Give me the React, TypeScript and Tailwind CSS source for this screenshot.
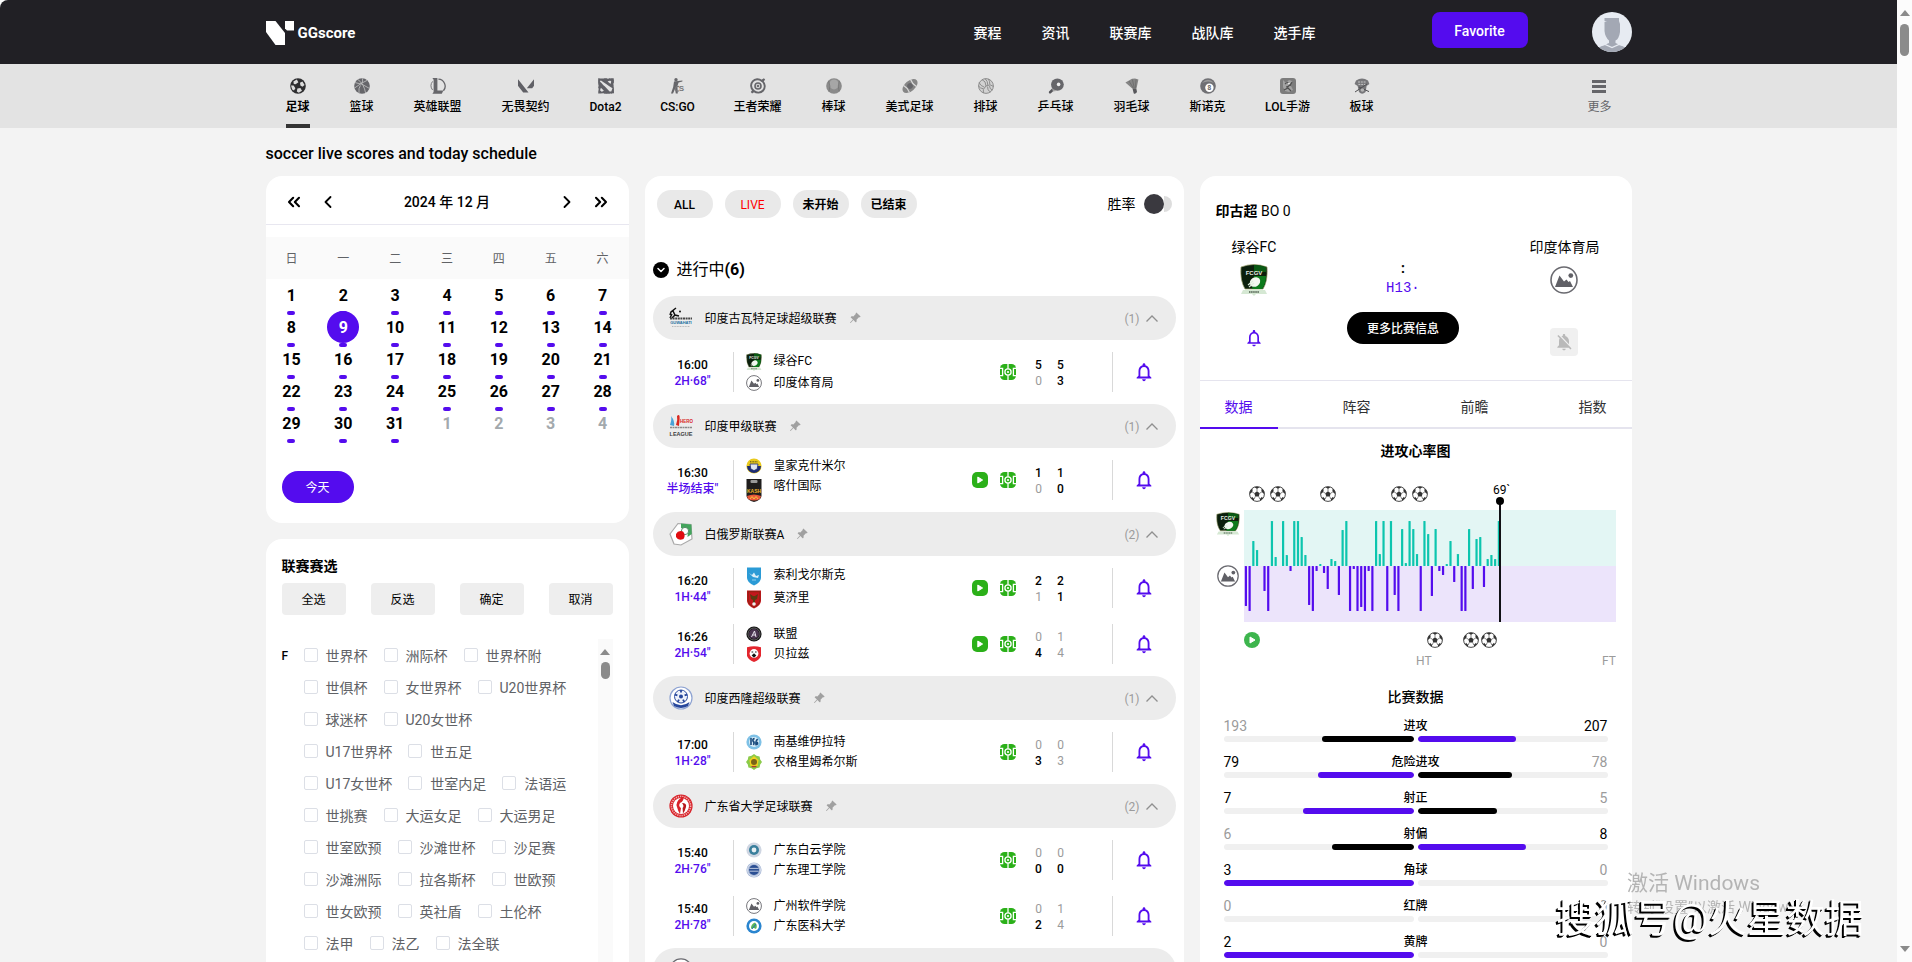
import { useState } from 'react';
import type { ReactNode } from 'react';
import { ChevronDown, ChevronLeft, ChevronRight, ChevronsLeft, ChevronsRight } from 'lucide-react';
import { BsPinAngleFill } from 'react-icons/bs';
import { MdNotificationsNone, MdNotificationsOff } from 'react-icons/md';
import { SiDota2, SiValorant } from 'react-icons/si';

const WEEKDAYS = ['日', '一', '二', '三', '四', '五', '六'];
const DAYS = Array.from({ length: 35 }, (_, i) => (i < 31 ? { n: i + 1, next: false } : { n: i - 30, next: true }));

const LEAGUE_ROWS = [
  ['世界杯', '洲际杯', '世界杯附'],
  ['世俱杯', '女世界杯', 'U20世界杯'],
  ['球迷杯', 'U20女世杯'],
  ['U17世界杯', '世五足'],
  ['U17女世杯', '世室内足', '法语运'],
  ['世挑赛', '大运女足', '大运男足'],
  ['世室欧预', '沙滩世杯', '沙足赛'],
  ['沙滩洲际', '拉各斯杯', '世欧预'],
  ['世女欧预', '英社盾', '土伦杯'],
  ['法甲', '法乙', '法全联'],
];

type Team = { name: string; logo: ReactNode };
type Match = { time: string; status: string; video?: boolean; home: Team; away: Team; half: [number, number]; full: [number, number]; bold: [boolean, boolean, boolean, boolean] };
type League = { name?: string; logo: ReactNode; matches: Match[] };

/* ---------- logos ---------- */

function NoLogo({ className = 'size-4' }: { className?: string }) {
  return (
    <svg viewBox="0 0 28 28" className={className} aria-hidden="true">
      <circle cx="14" cy="14" r="13" fill="#fff" stroke="#6a6a70" strokeWidth="1.6" />
      <path d="M5 21 L9.5 9.5 L14 15.5 L16.5 13.5 L18.5 16 L20 15 L23 21 Z" fill="#606066" />
      <circle cx="20.8" cy="9.6" r="2.4" fill="#606066" />
    </svg>
  );
}

function GreenShield({ className = 'w-4 h-[18px]' }: { className?: string }) {
  return (
    <svg viewBox="0 0 28 32" className={className} aria-hidden="true" preserveAspectRatio="none">
      <path d="M3 26 H25 L27 30 H16 L14 32 L12 30 H1 Z" fill="#d5e8d3" />
      <path d="M1 3 Q14 -2 27 3 Q28 17 23 25 H5 Q0 17 1 3 Z" fill="#0b1f0c" stroke="#9aa06a" strokeWidth="0.7" />
      <path d="M14 12 H26 Q26 20 22 25 H12 Z" fill="#0d7a1c" />
      <path d="M14 1 Q21 1 26 3 V8 H14 Z" fill="#0a5a14" />
      <text x="14" y="11" fontSize="6" fontFamily="Liberation Sans, sans-serif" fontWeight="700" fill="#e8efe6" textAnchor="middle">FCGV</text>
      <ellipse cx="15" cy="18" rx="5.5" ry="4.5" fill="#f3f8f1" transform="rotate(-35 15 18)" />
      <path d="M8 21 L13 17 M9 23 L14 19" stroke="#dfeedd" strokeWidth="1.2" />
      <path d="M9 28 H19" stroke="#4a5a4a" strokeWidth="1.4" strokeDasharray="1.5 0.6" />
    </svg>
  );
}

function Kashmir() {
  return (
    <svg viewBox="0 0 16 16" className="size-4" aria-hidden="true">
      <circle cx="8" cy="8" r="7.6" fill="#e9c91c" />
      <path d="M1 8 H15 A7 7 0 0 1 1 8 Z" fill="#1d2c74" />
      <path d="M4 6 H12 L11.2 11 L8 12.6 L4.8 11 Z" fill="#dfe5ee" stroke="#1d2c74" strokeWidth="0.8" />
      <path d="M4 3.8 H12" stroke="#4d4a1c" strokeWidth="1" strokeDasharray="1 0.6" />
    </svg>
  );
}

function Kash() {
  return (
    <svg viewBox="0 0 16 24" className="h-6 w-4" aria-hidden="true">
      <path d="M0.5 1 H15.5 V18 Q15 22 8 24 Q1 22 0.5 18 Z" fill="#1f1d1d" />
      <rect x="4.5" y="2" width="7" height="3" rx="1" fill="#9a9a9a" />
      <text x="8" y="15" fontSize="5" fontFamily="Liberation Sans, sans-serif" fontWeight="700" fill="#eeb62b" textAnchor="middle">KASH</text>
      <path d="M1 18 Q8 15 15 18 L14 21 Q8 24 2 21 Z" fill="#e9573a" />
      <path d="M4 21 L6 18.5 L8 21 L10 18.5 L12 21" fill="none" stroke="#f6c33b" strokeWidth="1" />
    </svg>
  );
}

function Shield({ fill, children }: { fill: string; children?: ReactNode }) {
  return (
    <svg viewBox="0 0 16 19" className="h-[19px] w-4" aria-hidden="true">
      <path d="M1 0.5 H15 V11 Q14.5 16 8 18.5 Q1.5 16 1 11 Z" fill={fill} />
      {children}
    </svg>
  );
}

function Round({ ring, inner, children }: { ring: string; inner: string; children?: ReactNode }) {
  return (
    <svg viewBox="0 0 16 16" className="size-4" aria-hidden="true">
      <circle cx="8" cy="8" r="7.6" fill={ring} />
      <circle cx="8" cy="8" r="5" fill={inner} />
      {children}
    </svg>
  );
}

const soligorsk = (
  <Shield fill="#2b9bd6">
    <path d="M3 6 L6 8 L8 5.5 L10 9 L13 8 L12 11 L7 10 Z" fill="#d9eef8" />
    <path d="M6 13 H10" stroke="#8fd0ee" />
  </Shield>
);
const mozyr = (
  <Shield fill="#c4161c">
    <path d="M2.2 1.7 H13.8 V11 Q13.4 15 8 17.2 Q2.6 15 2.2 11 Z" fill="none" stroke="#7e2a12" strokeWidth="0.8" />
    <path d="M4 4 L7 6 H9 L12 4 L11 9 L9 10 V13 H7 V10 L5 9 Z" fill="#5c3a10" />
    <circle cx="8" cy="14" r="1.8" fill="#eee" />
  </Shield>
);
const union = (
  <Round ring="#151515" inner="#4a3550">
    <circle cx="8" cy="8" r="6" fill="none" stroke="#8d8d8d" strokeWidth="0.6" />
    <path d="M5.5 11 L8.5 5 L10 11 M6.5 9 H10" stroke="#e8e4ee" fill="none" strokeWidth="1" />
  </Round>
);
const belaz = (
  <svg viewBox="0 0 16 16" className="size-4" aria-hidden="true">
    <path d="M1 1.2 Q8 -0.5 15 1.2 V10 Q13 14.5 8 16 Q3 14.5 1 10 Z" fill="#e3262e" />
    <circle cx="8" cy="7.5" r="4.4" fill="#fff" />
    <path d="M5.5 6 H7.2 M9 6 H10.6 M6.5 9.5 L8 8 L9.5 9.5 L8 11 Z" stroke="#1c1c1c" strokeWidth="1.2" />
  </svg>
);
const isg = (
  <Round ring="#7fc1e6" inner="#dbeef8">
    <path d="M5 4 V11 M8.6 4.6 Q6.4 4.6 7 7 Q9 8.5 7.4 11 M11.6 5 Q9.4 7 10 10.6 Q12.6 10 11 8" stroke="#17497c" strokeWidth="1.6" fill="none" />
  </Round>
);
const nongrim = (
  <svg viewBox="0 0 16 16" className="size-4" aria-hidden="true">
    <path d="M8 0 L10.5 1.8 L13.6 2.4 L14.2 5.6 L16 8 L14.2 10.5 L13.6 13.6 L10.4 14.2 L8 16 L5.6 14.2 L2.4 13.6 L1.8 10.5 L0 8 L1.8 5.6 L2.4 2.4 L5.5 1.8 Z" fill="#8bcb4a" />
    <path d="M8 2 L12.6 6 L11.6 12 H4.4 L3.4 6 Z" fill="#f0d21e" />
    <circle cx="8" cy="8" r="3" fill="#7a6418" />
    <path d="M5.6 12.6 H10.4" stroke="#b1392e" strokeWidth="1.4" />
  </svg>
);
const baiyun = (
  <Round ring="#cfd6e2" inner="#3a7f9c">
    <circle cx="8" cy="8" r="2.4" fill="#e6eff3" />
  </Round>
);
const ligong = (
  <Round ring="#a3b4d4" inner="#2b4f93">
    <path d="M3.4 6.4 H12.6 M3.4 9.2 H12.6" stroke="#dfe6f3" strokeWidth="0.8" />
    <circle cx="8" cy="8" r="6.4" fill="none" stroke="#fff" strokeWidth="0.6" />
  </Round>
);
const yike = (
  <Round ring="#2a85cf" inner="#fff">
    <path d="M5 11 Q4.6 6 9 4.4 Q12 7 10 11 Q7 9 5 11 Z" fill="#5bb65a" />
    <path d="M6 11 L10 6" stroke="#1f6fb8" strokeWidth="1" />
  </Round>
);

const guwahatiLogo = (
  <svg viewBox="0 0 24 24" className="size-6" aria-hidden="true">
    <path d="M7 2 L2 6 L1 9 M4 5 L6 9 L10 10 M3 8 L1 12 M6 9 L3 12" stroke="#111" strokeWidth="1.5" fill="none" />
    <circle cx="11" cy="5.5" r="1" fill="#111" />
    <path d="M1 12.5 H23" stroke="#444" strokeWidth="2" strokeDasharray="2 0.6" />
    <text x="12" y="18" fontSize="4" fontFamily="Liberation Sans, sans-serif" fontWeight="700" fill="#24709f" textAnchor="middle">GUWAHATI</text>
    <path d="M3 20.5 H21" stroke="#b9b9b9" strokeDasharray="1 0.6" />
  </svg>
);
const ileagueLogo = (
  <svg viewBox="0 0 24 26" className="h-[26px] w-6" aria-hidden="true">
    <path d="M1 12 Q3 6 2 3 Q6 8 5 13 Z" fill="#4aa3d8" />
    <path d="M7 12 Q9 7 8 3 Q11 0 10.6 6 L10 13 Z" fill="#d9281f" />
    <text x="17.5" y="10" fontSize="4.5" fontFamily="Liberation Sans, sans-serif" fontWeight="700" fill="#d8232a" textAnchor="middle">HERO</text>
    <path d="M1 14.5 H23" stroke="#8a8a8a" strokeWidth="1.4" strokeDasharray="2 0.5" />
    <text x="12" y="22.5" fontSize="5.5" fontFamily="Liberation Sans, sans-serif" fontWeight="700" fill="#3c3c3c" textAnchor="middle">LEAGUE</text>
  </svg>
);
const belarusLogo = (
  <svg viewBox="0 0 24 24" className="size-6" aria-hidden="true">
    <path d="M1 12 L9 1.5 L22 2.5 L23 17 L12 23 L5 22 Z" fill="#fff" stroke="#a9a9a9" strokeWidth="1.2" />
    <path d="M12 1.6 L22.4 2.6 L22.8 12 L18.5 15 Q21 7 12 6 Z" fill="#43a45c" />
    <circle cx="16" cy="9" r="3.6" fill="#fff" stroke="#4f8560" strokeWidth="0.9" />
    <path d="M7 12 Q9 8 14 9.5 Q17 13 14.5 17 Q9 19 7 15 Z" fill="#e00d10" />
  </svg>
);
const shillongLogo = (
  <svg viewBox="0 0 24 24" className="size-6" aria-hidden="true">
    <circle cx="12" cy="12" r="11" fill="#fff" stroke="#8ea3d2" strokeWidth="1.2" />
    <circle cx="12" cy="10.5" r="6.5" fill="#eef2fb" stroke="#2e4ea1" strokeWidth="1" />
    <circle cx="12" cy="10.5" r="2" fill="#27479c" />
    <path d="M12 4 V6.6 M6 8.6 L8.4 9.4 M18 8.6 L15.6 9.4 M8.6 16 L10 13.6 M15.4 16 L14 13.6" stroke="#27479c" strokeWidth="1.8" />
    <path d="M3.5 16 Q12 22.5 20.5 16 L19 20 Q12 24 5 20 Z" fill="#27479c" />
  </svg>
);
const guangdongLogo = (
  <svg viewBox="0 0 24 24" className="size-6" aria-hidden="true">
    <circle cx="12" cy="12" r="11.6" fill="#d8232a" />
    <circle cx="12" cy="12" r="9.6" fill="none" stroke="#f0b3b3" strokeWidth="1.6" strokeDasharray="1.2 1" />
    <circle cx="12" cy="12" r="8" fill="#fff" />
    <path d="M13 3 Q6 8 8 13 Q9 17 11 20 L12 14 Q9 12 11 9 Q15 7 14.6 3 Z" fill="#d8232a" />
    <path d="M13 9 Q18 9 17 13 Q16 17 14 19.5 L13.6 14 Q15.6 12 13 9 Z" fill="#b8171d" />
  </svg>
);

const LEAGUES: League[] = [
  {
    name: '印度古瓦特足球超级联赛',
    logo: guwahatiLogo,
    matches: [
      { time: '16:00', status: '2H·68"', home: { name: '绿谷FC', logo: <GreenShield /> }, away: { name: '印度体育局', logo: <NoLogo /> }, half: [5, 0], full: [5, 3], bold: [true, false, true, true] },
    ],
  },
  {
    name: '印度甲级联赛',
    logo: ileagueLogo,
    matches: [
      { time: '16:30', status: '半场结束"', video: true, home: { name: '皇家克什米尔', logo: <Kashmir /> }, away: { name: '喀什国际', logo: <Kash /> }, half: [1, 0], full: [1, 0], bold: [true, false, true, true] },
    ],
  },
  {
    name: '白俄罗斯联赛A',
    logo: belarusLogo,
    matches: [
      { time: '16:20', status: '1H·44"', video: true, home: { name: '索利戈尔斯克', logo: soligorsk }, away: { name: '莫济里', logo: mozyr }, half: [2, 1], full: [2, 1], bold: [true, false, true, true] },
      { time: '16:26', status: '2H·54"', video: true, home: { name: '联盟', logo: union }, away: { name: '贝拉兹', logo: belaz }, half: [0, 4], full: [1, 4], bold: [false, true, false, false] },
    ],
  },
  {
    name: '印度西隆超级联赛',
    logo: shillongLogo,
    matches: [
      { time: '17:00', status: '1H·28"', home: { name: '南基维伊拉特', logo: isg }, away: { name: '农格里姆希尔斯', logo: nongrim }, half: [0, 3], full: [0, 3], bold: [false, true, false, false] },
    ],
  },
  {
    name: '广东省大学足球联赛',
    logo: guangdongLogo,
    matches: [
      { time: '15:40', status: '2H·76"', home: { name: '广东白云学院', logo: baiyun }, away: { name: '广东理工学院', logo: ligong }, half: [0, 0], full: [0, 0], bold: [false, true, false, true] },
      { time: '15:40', status: '2H·78"', home: { name: '广州软件学院', logo: <NoLogo /> }, away: { name: '广东医科大学', logo: yike }, half: [0, 2], full: [1, 4], bold: [false, true, false, false] },
    ],
  },
  { logo: <NoLogo className="size-6" />, matches: [] },
];

/* ---------- sport icons ---------- */

function Ball({ size = 16, dark = '#333' }: { size?: number; dark?: string }) {
  return (
    <svg viewBox="0 0 16 16" width={size} height={size} aria-hidden="true">
      <circle cx="8" cy="8" r="7.4" fill="#fff" stroke={dark} strokeWidth="0.9" />
      <path d="M8 5.2 L10.7 7.2 L9.7 10.4 H6.3 L5.3 7.2 Z" fill={dark} />
      <path d="M5.4 0.9 H10.6 L8 3 Z M0.7 6 L2.6 2.9 L3.8 3.6 L3.2 6 L0.9 8 Z M15.3 6 L13.4 2.9 L12.2 3.6 L12.8 6 L15.1 8 Z M3 10.8 L5.2 13 L4.8 14.6 L2 12.4 Z M13 10.8 L10.8 13 L11.2 14.6 L14 12.4 Z" fill={dark} />
      <path d="M8 3 V5.2 M3.2 6 L5.3 7.2 M12.8 6 L10.7 7.2 M6.3 10.4 L5.2 13 M9.7 10.4 L10.8 13" stroke={dark} strokeWidth="0.6" />
    </svg>
  );
}

function DarkBall() {
  return (
    <svg viewBox="0 0 16 16" className="size-4" aria-hidden="true">
      <circle cx="8" cy="8" r="7.8" fill="#2e2e30" />
      <path d="M3.4 3.6 L6.8 1.6 L8.4 4.2 L5.6 6.2 L3.8 6 Z M10 4.8 L12.4 3.4 L14.6 7 L12.4 8.8 L10.4 7.4 Z M1 7.6 L3.6 7.4 L5.4 10.2 L4 12.4 L2.2 11.4 Z M7.4 10.4 L10.4 10 L12 12.8 L8.8 14.8 L6.8 13.6 Z" fill="#dcdcdc" />
    </svg>
  );
}

function Basketball() {
  return (
    <svg viewBox="0 0 16 16" className="size-4" fill="none" stroke="#c4c4c4" strokeWidth="0.8" aria-hidden="true">
      <circle cx="8" cy="8" r="7.8" fill="#66666a" stroke="none" />
      <path d="M4 1.6 Q10 6 11.6 15 M1 4.6 Q8 5 15.4 10.4 M0.6 10 Q7 5 13 2.4 M8.4 0.4 Q9 3 8 5.4 M5 15 Q4.4 10 6.4 7.4" />
    </svg>
  );
}

function Lol() {
  return (
    <svg viewBox="0 0 16 16" className="size-4" aria-hidden="true">
      <path d="M2.6 3.4 A7 7 0 0 0 2.6 12" stroke="#77777a" strokeWidth="1" fill="none" />
      <path d="M8.4 1.2 A7 7 0 0 1 13.4 12.8" stroke="#66666a" strokeWidth="1.3" fill="none" />
      <path d="M2.4 0 H7.4 V12.6 H13.4 L11.8 15.8 H2.4 L3.6 14 V1.8 Z" fill="#66666a" />
    </svg>
  );
}

function CounterStrike() {
  return (
    <svg viewBox="0 0 16 16" className="size-4" aria-hidden="true">
      <circle cx="6" cy="1.8" r="1.7" fill="#66666a" />
      <path d="M4 3.4 L8 3 L12.4 2.4 V3.4 L8.6 4.4 L7.4 8 L7.8 15.6 H5.8 L5 11 L3 15.6 H1 L3.2 9 Z" fill="#66666a" />
      <text x="11.4" y="13.4" fontSize="8" fontFamily="Liberation Sans, sans-serif" fontWeight="700" fill="#77777a" textAnchor="middle">S</text>
      <path d="M9 8.6 A2.4 2.4 0 1 0 9 12.8" stroke="#77777a" strokeWidth="1.2" fill="none" />
    </svg>
  );
}

function Honor() {
  return (
    <svg viewBox="0 0 16 16" className="size-4" fill="none" stroke="#66666a" aria-hidden="true">
      <path d="M14.4 1 L12.6 3.4 A6.3 6.3 0 0 1 4 13 L1.6 14.6 L3.2 12.2 A6.3 6.3 0 0 1 11.6 2.8 Z" strokeWidth="1.9" />
      <circle cx="8" cy="8" r="3" strokeWidth="1.6" />
      <circle cx="8" cy="8" r="0.9" fill="#66666a" />
    </svg>
  );
}

function Baseball() {
  return (
    <svg viewBox="0 0 16 16" className="size-4" fill="none" aria-hidden="true">
      <circle cx="8" cy="8" r="7.8" fill="#8a8a8a" />
      <ellipse cx="8" cy="6.4" rx="4.6" ry="5" fill="#a6a6a6" />
      <path d="M2.6 3 Q5 8 3 13.6 M13.4 3 Q11.2 8 13.2 13.2" stroke="#737373" strokeWidth="0.8" />
    </svg>
  );
}

function Rugby() {
  return (
    <svg viewBox="0 0 16 16" className="size-4" aria-hidden="true">
      <g transform="rotate(-40 8 8)">
        <ellipse cx="8" cy="8" rx="8.8" ry="5.2" fill="#868686" />
        <path d="M3.4 3.6 Q5 8 3.4 12.4 M12.6 3.6 Q11 8 12.6 12.4" stroke="#dcdcdc" strokeWidth="1.2" fill="none" />
        <circle cx="8" cy="8" r="2.8" fill="#66666a" />
      </g>
    </svg>
  );
}

function Volleyball() {
  return (
    <svg viewBox="0 0 16 16" className="size-4" fill="none" stroke="#858585" strokeWidth="0.9" aria-hidden="true">
      <circle cx="8" cy="8" r="7.4" fill="#d2d2d2" />
      <path d="M8 8 Q8 3 4 1.6 M8 8 Q12.5 5.5 15.4 8.4 M8 8 Q4 11.4 5.4 15 M9.8 7 Q9.8 3 7.2 0.8 M11.8 6.4 Q12 3.4 10.4 1 M6.4 9.2 Q2.6 8 1 4.6 M5.4 10.8 Q2 10.4 0.6 8 M9.6 8.6 Q9 12.4 12.4 14 M11.6 8 Q11.4 11 14.4 12" />
    </svg>
  );
}

function PingPong() {
  return (
    <svg viewBox="0 0 16 16" className="size-4" aria-hidden="true">
      <path d="M4.6 10 L1 13.4 Q0.4 14.6 1.4 15.4 Q2.4 15.8 3.2 15 L6.4 12" fill="#55555a" />
      <ellipse cx="9.4" cy="6.6" rx="6.4" ry="6.2" fill="#66666a" />
      <path d="M3.4 9 Q5.6 12.8 10 12.8 L5 13.4 Z" fill="#a5a5a5" />
      <circle cx="10.6" cy="6.4" r="1.8" fill="#efefef" />
    </svg>
  );
}

function Shuttle() {
  return (
    <svg viewBox="0 0 16 16" className="size-4" aria-hidden="true">
      <path d="M1.4 4.6 L5 2.6 L8 0.8 L11 0.6 L14.4 1.4 L12.4 11 H8.8 Z" fill="#858585" />
      <path d="M5 3 L9.6 10.6 M8.4 1.6 L10.4 10.6 M12 1.6 L11.4 10.6" stroke="#6a6a6a" strokeWidth="0.8" />
      <path d="M8.6 11 H12.4 L13 14 Q11.6 16.4 9.8 15.6 Z" fill="#57575b" />
    </svg>
  );
}

function Snooker() {
  return (
    <svg viewBox="0 0 16 16" className="size-4" aria-hidden="true">
      <circle cx="8" cy="8" r="7.8" fill="#707074" />
      <path d="M2 5 Q8 -1.4 14 5 Q8 2 2 5 Z" fill="#9a9a9a" />
      <circle cx="9.4" cy="9.8" r="4.2" fill="#fff" />
      <text x="9.4" y="12.2" fontSize="6.5" fontFamily="Liberation Sans, sans-serif" fontWeight="700" fill="#666" textAnchor="middle">8</text>
    </svg>
  );
}

function LolMobile() {
  return (
    <svg viewBox="0 0 16 16" className="size-4" aria-hidden="true">
      <rect width="16" height="16" rx="3" fill="#7c7c7c" />
      <path d="M3 2 L6 5 L9 2 L12 3 L11 8 L13 12 L9 14 L5 13 L3 9 Z" fill="#a2a2a2" />
      <path d="M5 6 Q8 3 10 6 Q9 9 6 9 M4 12 L8 10 L11 13 M12 4 L10 8" stroke="#4e4e4e" strokeWidth="1.1" fill="none" />
      <circle cx="9" cy="5.6" r="1" fill="#efefef" />
    </svg>
  );
}

function Cricket() {
  return (
    <svg viewBox="0 0 16 16" className="size-4" aria-hidden="true">
      <path d="M2 2.4 Q8 -1.4 14 2.4 L15.4 6 L12.6 8 L11.6 14 Q8 17.4 5 14 L3.6 8 L0.6 6 Z" fill="#77777a" />
      <path d="M4 4 H12 M4.4 6.4 H11.6" stroke="#c6c6c6" strokeWidth="1" strokeDasharray="2 0.8" />
      <path d="M1 14 L13 6 M15 13.6 L5 9" stroke="#4f4f52" strokeWidth="1" />
      <circle cx="8.4" cy="12" r="1.8" fill="#b5b5b5" />
    </svg>
  );
}

const SPORTS: { name: string; icon: ReactNode; width: string }[] = [
  { name: '足球', icon: <DarkBall />, width: 'w-6' },
  { name: '篮球', icon: <Basketball />, width: 'w-6' },
  { name: '英雄联盟', icon: <Lol />, width: 'w-12' },
  { name: '无畏契约', icon: <SiValorant size={16} />, width: 'w-12' },
  { name: 'Dota2', icon: <SiDota2 size={16} />, width: 'w-8' },
  { name: 'CS:GO', icon: <CounterStrike />, width: 'w-8' },
  { name: '王者荣耀', icon: <Honor />, width: 'w-12' },
  { name: '棒球', icon: <Baseball />, width: 'w-6' },
  { name: '美式足球', icon: <Rugby />, width: 'w-12' },
  { name: '排球', icon: <Volleyball />, width: 'w-6' },
  { name: '乒乓球', icon: <PingPong />, width: 'w-9' },
  { name: '羽毛球', icon: <Shuttle />, width: 'w-9' },
  { name: '斯诺克', icon: <Snooker />, width: 'w-9' },
  { name: 'LOL手游', icon: <LolMobile />, width: 'w-11' },
  { name: '板球', icon: <Cricket />, width: 'w-6' },
];

/* ---------- header ---------- */

function Header() {
  return (
    <header className="h-16 bg-[#212025]">
      <div className="mx-auto flex h-full w-full max-w-[1366px] items-center">
        <a href="#" className="flex items-center gap-1 pt-0.5">
          <svg viewBox="0 0 28 24" className="h-6 w-7" fill="#fff" aria-hidden="true">
            <path d="M0 0 H9.5 L19 12 V24 H9.5 L0 11 Z" />
            <path d="M19 0 H28 V9.5 H21 L19 7.5 Z" />
          </svg>
          <span className="text-[15px] font-bold text-white">GGscore</span>
        </a>
        <nav className="ml-auto flex gap-10 pt-0.5 text-sm font-medium text-white">
          {['赛程', '资讯', '联赛库', '战队库', '选手库'].map((item) => (
            <a key={item} href="#">{item}</a>
          ))}
        </nav>
        <button className="mr-16 mb-1 ml-[116px] h-9 w-24 rounded-lg bg-[#540cee] pt-0.5 text-sm font-medium text-white">Favorite</button>
        <svg viewBox="0 0 40 40" className="size-10" role="img" aria-label="用户">
          <clipPath id="avatar"><circle cx="20" cy="20" r="20" /></clipPath>
          <g clipPath="url(#avatar)">
            <rect width="40" height="40" fill="#e7ebf2" />
            <path d="M12.5 6 H27 V9 L28 12 V20 Q27 27 23.5 28.5 V31 L35 36 V40 H5 V36 L17 31 V28.5 Q13 25 12.5 19 V10 H15 L12.5 9 Z" fill="#a3a8b4" />
            <path d="M6 34.5 L13 32.5 L20 35.5 L27 32.5 L34 34.5" stroke="#e7ebf2" strokeWidth="1.2" fill="none" />
          </g>
        </svg>
      </div>
    </header>
  );
}

function SportNav() {
  const [active, setActive] = useState('足球');
  return (
    <nav className="h-16 bg-[#e3e3e3]">
      <div className="mx-auto flex h-full w-full max-w-[1366px] justify-between px-5">
        <div className="flex gap-10">
          {SPORTS.map((s) => (
            <button key={s.name} onClick={() => setActive(s.name)} className={`flex flex-col items-center pt-3.5 text-[#606066] ${s.width}`}>
              {s.icon}
              <span className={`mt-[5px] text-xs whitespace-nowrap text-black ${active === s.name ? 'font-bold' : 'font-medium'}`}>{s.name}</span>
              {active === s.name && <span className="mt-auto h-1 w-6 bg-[#333]" />}
            </button>
          ))}
        </div>
        <button className="flex flex-col items-center pt-3.5 text-[#66666a]">
          <svg viewBox="0 0 16 16" className="size-4" aria-hidden="true">
            <path d="M1 3.5 H15 M1 8.5 H15 M1 13.5 H15" stroke="#66666a" strokeWidth="3" />
          </svg>
          <span className="mt-[5px] text-xs">更多</span>
        </button>
      </div>
    </nav>
  );
}

/* ---------- left column ---------- */

function Calendar() {
  const [day, setDay] = useState(9);
  return (
    <section className="rounded-2xl bg-white pb-5">
      <div className="flex h-[49px] items-center border-b border-[#e8e7f0] px-[18px] pt-1">
        <button aria-label="上一年"><ChevronsLeft size={20} strokeWidth={2.5} /></button>
        <button aria-label="上个月" className="ml-3.5"><ChevronLeft size={20} strokeWidth={2.2} /></button>
        <h2 className="flex-1 text-center text-sm font-medium">2024 年 12 月</h2>
        <button aria-label="下个月" className="mr-3.5"><ChevronRight size={20} strokeWidth={2.2} /></button>
        <button aria-label="下一年"><ChevronsRight size={20} strokeWidth={2.5} /></button>
      </div>
      <div className="mt-3 grid h-[42px] grid-cols-7 items-center bg-[#fafafa] pt-0.5 text-center text-xs text-[#606266]">
        {WEEKDAYS.map((d) => <span key={d}>{d}</span>)}
      </div>
      <div className="grid grid-cols-7 justify-items-center">
        {DAYS.map((d) => {
          const on = !d.next && d.n === day;
          return (
            <div key={`${d.n}-${d.next}`} className="flex h-8 flex-col items-center text-base font-bold">
              <button
                onClick={() => setDay(d.n)}
                className={`size-8 shrink-0 rounded-full pt-0.5 ${on ? 'bg-[#540cee] text-white' : d.next ? 'text-[#a3a9ad]' : 'text-black'}`}
              >
                {d.n}
              </button>
              {!d.next && <span className="h-1 w-2 shrink-0 rounded-sm bg-[#540cee]" />}
            </div>
          );
        })}
      </div>
      <button onClick={() => setDay(9)} className="mt-8 ml-4 h-8 w-[72px] rounded-full bg-[#540cee] pt-0.5 text-xs text-white">今天</button>
    </section>
  );
}

function LeagueFilter() {
  return (
    <section className="mt-4 rounded-t-2xl bg-white px-4 pt-4">
      <h2 className="text-sm leading-[22px] font-bold">联赛赛选</h2>
      <div className="mt-1.5 flex justify-between">
        {['全选', '反选', '确定', '取消'].map((b) => (
          <button key={b} className="h-8 w-16 rounded bg-[#eeeeee] pt-0.5 text-xs">{b}</button>
        ))}
      </div>
      <div className="mt-6 flex">
        <span className="w-[22px] text-xs leading-[34px] font-medium">F</span>
        <div className="flex-1 pb-8">
          {LEAGUE_ROWS.map((row) => (
            <div key={row[0]} className="flex h-8 items-center gap-4">
              {row.map((name) => (
                <label key={name} className="flex items-center gap-2 text-sm whitespace-nowrap text-[#606266]">
                  <input type="checkbox" className="size-3.5 appearance-none rounded-[2px] border border-[#dcdfe6] bg-white checked:bg-[#540cee]" />
                  <span className="pt-0.5">{name}</span>
                </label>
              ))}
            </div>
          ))}
        </div>
        <div className="flex w-[15px] flex-col items-center bg-[#fafafa] pt-2.5">
          <svg viewBox="0 0 10 6" className="h-1.5 w-2.5" aria-hidden="true"><path d="M0 6 L5 0 L10 6 Z" fill="#8b8b8b" /></svg>
          <span className="mt-[7px] h-[17px] w-[9px] rounded-full bg-[#8b8b8b]" />
        </div>
      </div>
    </section>
  );
}

/* ---------- matches ---------- */

function PitchIcon() {
  return (
    <svg viewBox="0 0 16 16" className="size-4" aria-hidden="true">
      <rect width="16" height="16" rx="4.5" fill="#2bb019" />
      <path d="M8 0 V4.8 M8 11.2 V16 M0 4.4 H2.6 V11.6 H0 M16 4.4 H13.4 V11.6 H16" stroke="#fff" strokeWidth="1.3" fill="none" />
      <circle cx="8" cy="8" r="3.1" stroke="#fff" strokeWidth="1.3" fill="none" />
      <circle cx="8" cy="8" r="1.1" fill="#fff" />
    </svg>
  );
}

function PlayIcon() {
  return (
    <svg viewBox="0 0 16 16" className="size-4" aria-hidden="true">
      <rect width="16" height="16" rx="5" fill="#2bb019" />
      <path d="M5.8 5 L10.6 8 L5.8 11 Z" fill="#fff" stroke="#fff" strokeLinejoin="round" />
    </svg>
  );
}

function Score({ value, bold }: { value: number; bold: boolean }) {
  return <span className={bold ? 'font-medium text-black' : 'text-[#9b9b9b]'}>{value}</span>;
}

function MatchRow({ m }: { m: Match }) {
  return (
    <div className="flex h-14 items-center text-xs">
      <div className="w-20 pt-0.5 text-center leading-4">
        <div className="font-medium">{m.time}</div>
        <div className="font-medium text-[#540cee]">{m.status}</div>
      </div>
      <div className="flex h-10 flex-1 flex-col justify-center gap-1 border-l border-[#d9d9d9] pl-3">
        {[m.home, m.away].map((t) => (
          <div key={t.name} className="flex items-start gap-3">
            {t.logo}
            <span className="leading-4">{t.name}</span>
          </div>
        ))}
      </div>
      <div className="mr-3 flex gap-3">
        {m.video && <button aria-label="视频直播"><PlayIcon /></button>}
        <button aria-label="动画直播"><PitchIcon /></button>
      </div>
      <div className="mr-10 grid w-11 grid-cols-2 pt-0.5 text-center leading-4">
        <Score value={m.half[0]} bold={m.bold[0]} />
        <Score value={m.full[0]} bold={m.bold[2]} />
        <Score value={m.half[1]} bold={m.bold[1]} />
        <Score value={m.full[1]} bold={m.bold[3]} />
      </div>
      <div className="flex h-10 w-16 items-center justify-center border-l border-[#d9d9d9]">
        <button aria-label="提醒" className="text-[#540cee]"><MdNotificationsNone size={22} /></button>
      </div>
    </div>
  );
}

function MatchList() {
  const [odds, setOdds] = useState(false);
  return (
    <section className="rounded-t-2xl bg-white px-2 pt-3.5">
      <div className="flex items-center gap-3 px-1">
        {['ALL', 'LIVE', '未开始', '已结束'].map((f) => (
          <button key={f} className={`h-7 w-14 rounded-full bg-[#e9e9e9] pt-0.5 text-xs ${f === 'LIVE' ? 'text-[#f00]' : f === 'ALL' ? 'font-medium' : 'font-bold'}`}>{f}</button>
        ))}
        <label className="ml-auto flex items-center gap-2 text-sm">
          胜率
          <span className="flex w-7 items-center">
            <input type="checkbox" checked={odds} onChange={() => setOdds(!odds)} className="peer sr-only" />
            <span className="size-5 rounded-full bg-[#3a393f] peer-checked:order-last" />
            <span className="h-4 w-2 rounded-r-full bg-[#dddddd]" />
          </span>
        </label>
      </div>
      <h2 className="mt-10 mb-3.5 flex h-6 items-center gap-2 text-base">
        <span className="flex size-4 items-center justify-center rounded-full bg-black text-white"><ChevronDown size={12} strokeWidth={3} /></span>
        <span>进行中<b className="font-bold">(6)</b></span>
      </h2>
      {LEAGUES.map((l, i) => (
        <div key={i}>
          <div className="flex h-11 items-center gap-3 rounded-[22px] bg-[#ececec] pr-[18px] pl-4 text-xs">
            {l.logo}
            {l.name && (
              <>
                <h3 className="pt-0.5">{l.name}</h3>
                <button aria-label="置顶" className="text-[#a0a0a0]"><BsPinAngleFill size={12} /></button>
                <button className="ml-auto flex items-center gap-1.5 text-[#9b9b9b]">
                  <span className="pt-0.5">({l.matches.length})</span>
                  <svg viewBox="0 0 12 7" className="h-[7px] w-3" fill="none" stroke="#8f8f8f" strokeWidth="1.3" aria-hidden="true"><path d="M0.5 6.5 L6 1 L11.5 6.5" /></svg>
                </button>
              </>
            )}
          </div>
          <div className="py-1">
            {l.matches.map((m) => <MatchRow key={m.home.name} m={m} />)}
          </div>
        </div>
      ))}
    </section>
  );
}

/* ---------- match detail ---------- */

// one value per minute, home pressure above zero, away below
const PRESSURE = [
  -40, -45, 25, 16, 0, -25, -45, 45, 9, 0, 45, 11, -5, 45, 45, 29, 11, -39, -45, -5, 2, -7, -23, 7, 5,
  -29, 36, 45, -45, -3, -45, -41, -45, -5, -45, 45, 12, 45, -45, 45, -29, -45, 37, 3, 45, 37, 12, -45, 45, 32,
  -30, 37, -5, -9, 2, 25, -16, 12, -45, -45, 37, -23, 27, 29, -21, 7, 11, 7, 45,
];

function PressureChart() {
  return (
    <svg viewBox="0 0 400 196" className="mt-4 block w-full" role="img" aria-label="进攻心率图">
      <rect x="28" y="33" width="372" height="56" fill="#e3f6f4" />
      <rect x="28" y="89" width="372" height="56" fill="#ece4fb" />
      {PRESSURE.map((v, i) => (
        <rect key={i} x={28.8 + i * 3.72} y={v > 0 ? 89 - v : 89} width="2.2" height={Math.abs(v)} rx="0.6" fill={v > 0 ? '#0cc5ae' : '#540cee'} />
      ))}
      {[41, 62, 112, 183, 204].map((x) => <g key={x} transform={`translate(${x - 8} 9)`}><Ball /></g>)}
      {[219, 255, 273].map((x) => <g key={x} transform={`translate(${x - 8} 155)`}><Ball /></g>)}
      <circle cx="36" cy="163" r="8" fill="#3db54d" />
      <path d="M34 160 L39 163 L34 166 Z" fill="#fff" stroke="#fff" strokeLinejoin="round" />
      <rect x="283" y="24" width="2" height="121" fill="#111115" />
      <circle cx="284" cy="24" r="4" fill="#000" />
      <text x="277" y="17" fontSize="12">69`</text>
      <text x="200" y="188" fontSize="12" fill="#9b9b9b">HT</text>
      <text x="400" y="188" fontSize="12" fill="#9b9b9b" textAnchor="end">FT</text>
      <svg x="0" y="35" width="24" height="24"><GreenShield className="h-6 w-6" /></svg>
      <svg x="1" y="88" width="22" height="22"><NoLogo className="size-[22px]" /></svg>
    </svg>
  );
}

const STATS: [string, number, number][] = [
  ['进攻', 193, 207],
  ['危险进攻', 79, 78],
  ['射正', 7, 5],
  ['射偏', 6, 8],
  ['角球', 3, 0],
  ['红牌', 0, 0],
  ['黄牌', 2, 0],
];

function StatBar({ value, other, right }: { value: number; other: number; right?: boolean }) {
  const share = value + other ? (value / (value + other)) * 100 : 0;
  return (
    <div className={`flex h-1.5 flex-1 overflow-hidden rounded-full bg-[#f0f0f0] ${right ? '' : 'justify-end'}`}>
      <div className={`h-full rounded-full ${value > other ? 'bg-[#540cee]' : 'bg-black'}`} style={{ width: `${share}%` }} />
    </div>
  );
}

function MatchDetail() {
  const [tab, setTab] = useState('数据');
  return (
    <section className="rounded-t-2xl bg-white">
      <div className="px-4 pt-6 pb-6">
        <h2 className="text-sm leading-[22px]"><b className="font-bold">印古超</b> BO 0</h2>
        <div className="mt-3.5 flex justify-between">
          <div className="flex flex-col items-center px-4">
            <span className="text-sm leading-[22px]">绿谷FC</span>
            <span className="mt-1.5 flex h-8 items-center"><GreenShield className="h-8 w-7" /></span>
            <button aria-label="提醒" className="mt-8 text-[#540cee]"><MdNotificationsNone size={20} /></button>
          </div>
          <div className="flex flex-col items-center pt-[22px] text-sm leading-5">
            <span className="font-bold">:</span>
            <span className="font-['Liberation_Mono',monospace] text-[#540cee]">H13·</span>
            <button className="mt-3.5 h-8 w-28 rounded-full bg-black pt-0.5 text-xs font-medium text-white">更多比赛信息</button>
          </div>
          <div className="flex flex-col items-center px-4">
            <span className="text-sm leading-[22px]">印度体育局</span>
            <span className="mt-1.5 flex h-8 items-center"><NoLogo className="size-7" /></span>
            <button aria-label="关闭提醒" className="mt-8 flex size-7 items-center justify-center rounded-sm bg-[#f0f0f0] text-[#b9b9b9]"><MdNotificationsOff size={20} /></button>
          </div>
        </div>
      </div>
      <div role="tablist" className="flex h-[49px] justify-between border-t border-b-2 border-[#e5e4ee]">
        {['数据', '阵容', '前瞻', '指数'].map((t) => (
          <button
            key={t}
            role="tab"
            aria-selected={tab === t}
            onClick={() => setTab(t)}
            className={`-mb-0.5 w-[78px] border-b-2 pt-1.5 text-sm ${tab === t ? 'border-[#540cee] text-[#540cee]' : 'border-transparent text-[#303133]'}`}
          >
            {t}
          </button>
        ))}
      </div>
      <div className="px-4 pt-3">
        <h3 className="text-center text-sm leading-5 font-bold">进攻心率图</h3>
        <PressureChart />
      </div>
      <div className="px-6 pt-3.5">
        <h3 className="text-center text-sm leading-5 font-medium">比赛数据</h3>
        <div className="mt-[11px] flex flex-col gap-3">
          {STATS.map(([label, home, away]) => (
            <div key={label}>
              <div className="flex h-[18px] justify-between leading-4">
                <span className={`w-16 text-sm leading-4 ${home > away ? 'text-black' : 'text-[#9b9b9b]'}`}>{home}</span>
                <span className="text-xs leading-4 font-medium">{label}</span>
                <span className={`w-16 text-right text-sm leading-4 ${away > home ? 'text-black' : 'text-[#9b9b9b]'}`}>{away}</span>
              </div>
              <div className="flex gap-1">
                <StatBar value={home} other={away} />
                <StatBar value={away} other={home} right />
              </div>
            </div>
          ))}
        </div>
      </div>
    </section>
  );
}

export default function App() {
  return (
    <div className="flex h-screen overflow-hidden bg-[#fcfcfc] font-['Roboto','Noto_Sans_CJK_SC',sans-serif] text-black">
      <div className="min-w-0 flex-1 overflow-hidden rounded-tl-lg bg-[#f3f3f3]">
        <Header />
        <SportNav />
        <div className="mx-auto w-full max-w-[1366px]">
          <h1 className="flex h-12 items-center pt-1 text-base font-medium">soccer live scores and today schedule</h1>
          <main className="grid grid-cols-[363fr_539fr_432fr] gap-4">
            <div>
              <Calendar />
              <LeagueFilter />
            </div>
            <MatchList />
            <MatchDetail />
          </main>
        </div>
      </div>

      {/* page scrollbar */}
      <div className="flex w-[15px] flex-col items-center py-2.5">
        <svg viewBox="0 0 10 6" className="h-1.5 w-2.5" aria-hidden="true"><path d="M0 6 L5 0 L10 6 Z" fill="#8b8b8b" /></svg>
        <span className="mt-2 h-8 w-[9px] rounded-full bg-[#8b8b8b]" />
        <svg viewBox="0 0 10 6" className="mt-auto h-1.5 w-2.5" aria-hidden="true"><path d="M0 0 L5 6 L10 0 Z" fill="#8b8b8b" /></svg>
      </div>

      {/* watermarks */}
      <div className="pointer-events-none fixed right-[110px] bottom-[45px] w-[175px] text-[#b4b4b4]">
        <p className="text-[21px] leading-7 whitespace-nowrap">激活 Windows</p>
        <p className="text-sm leading-5 whitespace-nowrap">转到“设置”以激活 Windows。</p>
      </div>
      <p className="pointer-events-none fixed right-12 bottom-[18px] text-[39px] leading-[50px] whitespace-nowrap text-white [text-shadow:-1px_1px_0_#000,-2px_2px_0_#000]">搜狐号@火星数据</p>
    </div>
  );
}
